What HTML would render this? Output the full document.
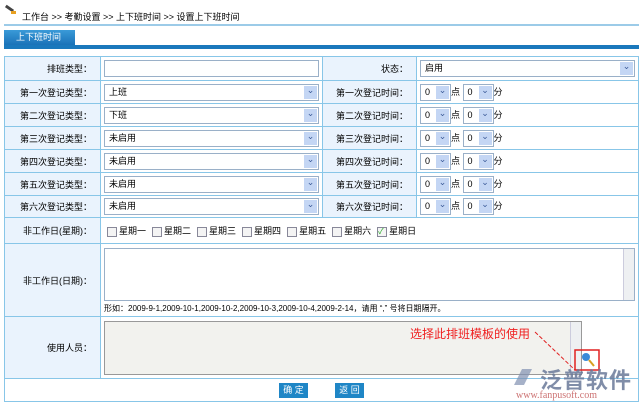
<!DOCTYPE html>
<html><head><meta charset="utf-8"><style>
*{box-sizing:border-box;margin:0;padding:0}
body{width:643px;height:411px;background:#fff;font-family:"Liberation Sans","Noto Sans CJK SC",sans-serif;font-size:9px;color:#000;position:relative;overflow:hidden}
.a{position:absolute}
table{position:absolute;left:4px;top:56px;width:635px;border-collapse:collapse}
td{border:1px solid #88c6e8;padding:0 3px;vertical-align:middle}
td.l{background:#eaf3fd;text-align:right;padding-right:8px}
.sel{height:17px;border:1px solid #9ab0c8;background:#fff;position:relative;padding-left:4px;line-height:15px;font-size:9px}
.sel:after{content:"⌄";position:absolute;right:1px;top:1px;width:13px;height:13px;background:#c4d6f4;color:#3a5a98;font-size:9px;line-height:8px;text-align:center}
.cb{display:inline-block;width:10px;height:10px;border:1px solid #889;background:#f4f4f4;vertical-align:middle;margin:0 2px 0 6px}
.btn{position:absolute;top:383px;height:15px;background:#1f86c6;color:#fff;font-size:9px;line-height:15px;text-align:center;width:29px}
</style></head><body>
<div class="a" style="left:5px;top:7px;width:9px;height:3px;background:#444;transform:rotate(35deg)"></div>
<div class="a" style="left:11px;top:11px;width:5px;height:3px;background:#e8a020"></div>
<div class="a" style="left:22px;top:10px;font-size:9px">工作台 &gt;&gt; 考勤设置 &gt;&gt; 上下班时间 &gt;&gt; 设置上下班时间</div>
<div class="a" style="left:4px;top:24px;width:635px;height:2px;background:#9ccbe8"></div>
<div class="a" style="left:4px;top:30px;width:71px;height:15px;background:linear-gradient(#3a9ad8,#1a72b8);color:#fff;line-height:15px;padding-left:12px">上下班时间</div>
<div class="a" style="left:4px;top:45px;width:635px;height:4px;background:#1a78bc"></div>
<table>
<tr style="height:24px"><td class="l" style="width:96px">排班类型：</td><td style="width:222px"><div style="height:17px;border:1px solid #9ab0c8"></div></td><td class="l" style="width:94px">状态：</td><td><div class="sel">启用</div></td></tr>
<tr style="height:23px"><td class="l">第一次登记类型：</td><td><div class="sel">上班</div></td><td class="l">第一次登记时间：</td><td>TIME</td></tr>
<tr style="height:23px"><td class="l">第二次登记类型：</td><td><div class="sel">下班</div></td><td class="l">第二次登记时间：</td><td>TIME</td></tr>
<tr style="height:23px"><td class="l">第三次登记类型：</td><td><div class="sel">未启用</div></td><td class="l">第三次登记时间：</td><td>TIME</td></tr>
<tr style="height:23px"><td class="l">第四次登记类型：</td><td><div class="sel">未启用</div></td><td class="l">第四次登记时间：</td><td>TIME</td></tr>
<tr style="height:23px"><td class="l">第五次登记类型：</td><td><div class="sel">未启用</div></td><td class="l">第五次登记时间：</td><td>TIME</td></tr>
<tr style="height:22px"><td class="l">第六次登记类型：</td><td><div class="sel">未启用</div></td><td class="l">第六次登记时间：</td><td>TIME</td></tr>
<tr style="height:26px"><td class="l">非工作日(星期)：</td><td colspan="3" style="padding-left:0"><span class="cb"></span>星期一<span class="cb"></span>星期二<span class="cb"></span>星期三<span class="cb"></span>星期四<span class="cb"></span>星期五<span class="cb"></span>星期六<span class="cb" style="color:#2a2;font-size:8px;line-height:8px">✓</span>星期日</td></tr>
<tr style="height:73px"><td class="l">非工作日(日期)：</td><td colspan="3" style="vertical-align:top;padding-top:4px"><div style="height:53px;border:1px solid #9ab0c8;position:relative"><div style="position:absolute;right:0;top:0;width:11px;height:51px;background:#eef0f2;border-left:1px solid #ccd"></div></div><div style="margin-top:2px;font-size:8px">形如：2009-9-1,2009-10-1,2009-10-2,2009-10-3,2009-10-4,2009-2-14，请用 “,” 号将日期隔开。</div></td></tr>
<tr style="height:62px"><td class="l">使用人员：</td><td colspan="3" style="vertical-align:top;padding-top:4px"><div style="width:478px;height:54px;border:1px solid #999;background:#f2f2ee;position:relative"><div style="position:absolute;right:0;top:0;width:11px;height:52px;background:#eef0f2;border-left:1px solid #ccd"></div></div></td></tr>
<tr style="height:23px"><td colspan="4"></td></tr>
</table>
<div class="btn" style="left:279px">确 定</div>
<div class="btn" style="left:335px">返 回</div>
<div class="a" style="left:410px;top:325px;color:#f02020;font-size:12px">选择此排班模板的使用</div>
<svg class="a" style="left:0;top:0" width="643" height="411"><line x1="535" y1="332" x2="575" y2="370" stroke="#e02020" stroke-dasharray="4,2"/><rect x="575" y="350" width="24" height="20" fill="none" stroke="#e02020" stroke-width="1.5"/><circle cx="586" cy="357" r="4" fill="#3a8ad8"/><path d="M589 360l5 6" stroke="#d8a020" stroke-width="2"/><path d="M514 385l8-16h10l-8 16z" fill="#8090b0" opacity=".7"/></svg>
<div class="a" style="left:540px;top:363px;color:#6a7a9a;font-size:22px;font-weight:bold;opacity:.85;letter-spacing:1px">泛普软件</div>
<div class="a" style="left:516px;top:390px;color:#c05050;font-size:10px;opacity:.8;font-family:'Liberation Serif',serif">www.fanpusoft.com</div>
<script>
document.querySelectorAll('td').forEach(function(t){if(t.textContent==='TIME'){t.innerHTML='<div class="sel" style="display:inline-block;width:31px;vertical-align:middle">0</div>点 <div class="sel" style="display:inline-block;width:31px;vertical-align:middle">0</div>分';}});
</script>
</body></html>
